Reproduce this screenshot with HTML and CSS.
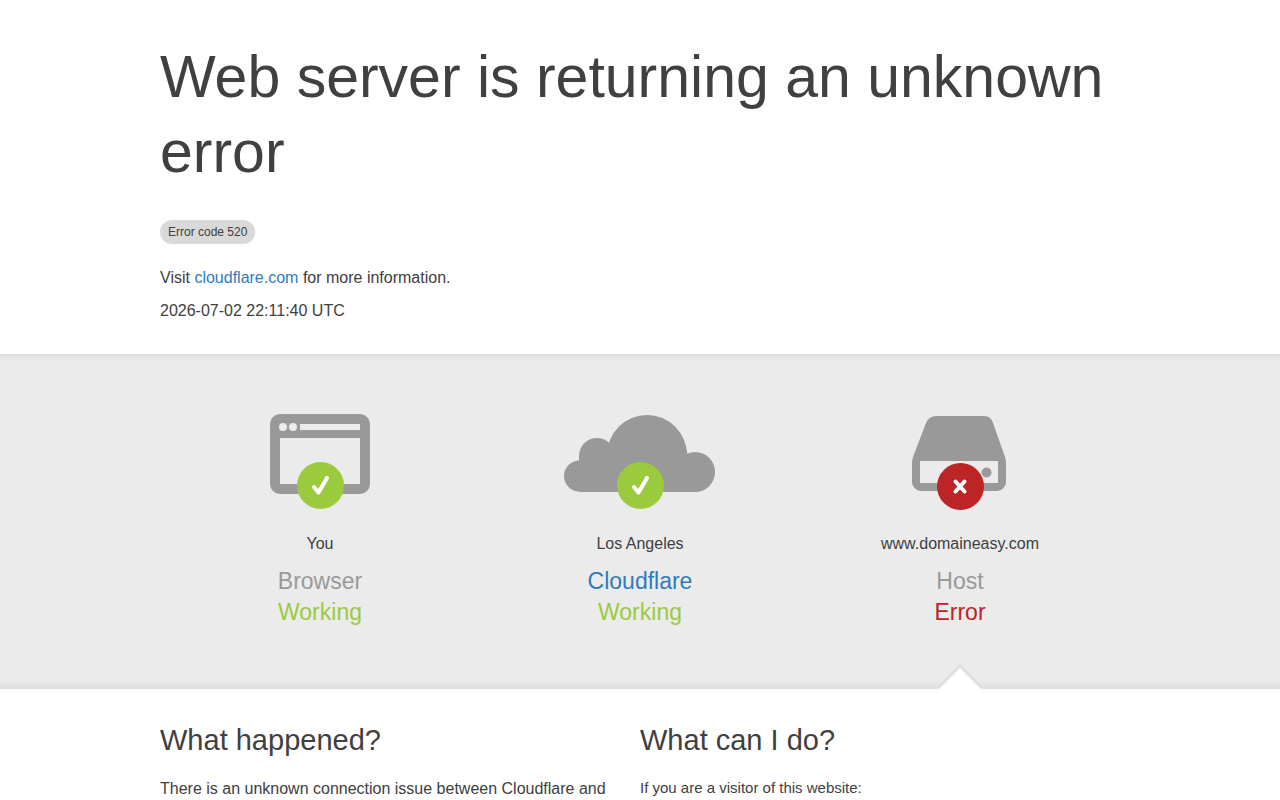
FILE: index.html
```html
<!DOCTYPE html>
<html lang="en">
  <head>
    <meta charset="utf-8">
    <title>domaineasy.com | 520: Web server is returning an unknown error</title>
    <meta name="viewport" content="width=device-width, initial-scale=1">
    <link rel="stylesheet" href="styles.css">
  </head>
  <body>
    <header class="wrapper header">
      <h1>Web server is returning an unknown error</h1>
      <span class="code-label">Error code 520</span>
      <p>Visit <a href="https://www.cloudflare.com/">cloudflare.com</a> for more information.</p>
      <p>2026-07-02 22:11:40 UTC</p>
    </header>

    <section class="status">
      <div class="wrapper status-row">
        <div class="status-item">
          <svg class="icon" viewBox="0 0 160 100" aria-hidden="true">
            <path fill="#999" fill-rule="evenodd" d="M40 4h80a10 10 0 0 1 10 10v60a10 10 0 0 1-10 10H40a10 10 0 0 1-10-10V14A10 10 0 0 1 40 4zM40 28v46h80V28zM60 14v6h60v-6z"/>
            <circle cx="43" cy="17" r="4" fill="#ebebeb"/>
            <circle cx="53" cy="17" r="4" fill="#ebebeb"/>
            <circle cx="80.500" cy="75.500" r="23.500" fill="#9bca3e"/>
            <path fill="none" stroke="#fff" stroke-width="4" stroke-linecap="round" stroke-linejoin="round" d="M74 77l4.500 5.500L87 68"/>
          </svg>
          <span class="place">You</span>
          <h3 class="name">Browser</h3>
          <span class="result ok">Working</span>
        </div>
        <div class="status-item">
          <svg class="icon" viewBox="0 0 160 100" aria-hidden="true">
            <g fill="#999">
              <circle cx="19.500" cy="66" r="15.500"/>
              <circle cx="37" cy="46" r="18"/>
              <circle cx="87" cy="45" r="40"/>
              <circle cx="135" cy="62" r="20"/>
              <path d="M19 46h20V40h88v22h8v20H19z"/>
            </g>
            <circle cx="80.500" cy="75.500" r="23.500" fill="#9bca3e"/>
            <path fill="none" stroke="#fff" stroke-width="4" stroke-linecap="round" stroke-linejoin="round" d="M74 77l4.500 5.500L87 68"/>
          </svg>
          <span class="place">Los Angeles</span>
          <h3 class="name"><a href="https://www.cloudflare.com/">Cloudflare</a></h3>
          <span class="result ok">Working</span>
        </div>
        <div class="status-item current">
          <svg class="icon" viewBox="0 0 160 100" aria-hidden="true">
            <path fill="#999" fill-rule="evenodd" d="M56 6h48q7 0 9 7l12 34q1 3 1 6v19a9 9 0 0 1-9 9H41a9 9 0 0 1-9-9V53q0-3 1-6L46 13q3-7 10-7zM41 51q-1 0-1 1v20q0 1 1 1h76q1 0 1-1V52q0-1-1-1z"/>
            <circle cx="106.500" cy="62.500" r="5" fill="#999"/>
            <circle cx="80.500" cy="76.500" r="23.500" fill="#bd2426"/>
            <path fill="none" stroke="#fff" stroke-width="4" stroke-linecap="round" d="M75.500 71.500l9 10M84.500 71.500l-9 10"/>
          </svg>
          <span class="place">www.domaineasy.com</span>
          <h3 class="name">Host</h3>
          <span class="result error">Error</span>
        </div>
      </div>
    </section>

    <main class="wrapper details">
      <div>
        <h2>What happened?</h2>
        <p>There is an unknown connection issue between Cloudflare and</p>
      </div>
      <div>
        <h2>What can I do?</h2>
        <h4>If you are a visitor of this website:</h4>
      </div>
    </main>
  </body>
</html>
```
FILE: styles.css
```css
* {
  box-sizing: border-box;
}

body {
  margin: 0;
  background: #fff;
  color: #404040;
  font-family: "Liberation Sans", Arial, sans-serif;
  font-size: 16px;
  line-height: 24px;
}

h1, h2, h3, h4, p {
  margin: 0;
  font-weight: 400;
}

a {
  color: #2f7bbf;
  text-decoration: none;
}

.wrapper {
  width: 75%;
  margin: 0 auto;
}

.header {
  padding: 40px 0 31px;
}

.header h1 {
  margin-bottom: 30px;
  font-size: 59px;
  line-height: 75px;
}

.code-label {
  display: block;
  width: max-content;
  margin-bottom: 22px;
  padding: 0 8px;
  border-radius: 12px;
  background: #d9d9d9;
  font-size: 12px;
}

.header p + p {
  margin-top: 9px;
}

.status {
  padding: 56px 0 61px;
  background: linear-gradient(to bottom, #dcdcdc, #e6e6e6 4px, #ebebeb 8px, #ebebeb calc(100% - 8px), #dedede);
}

.status-row {
  display: flex;
}

.status-item {
  position: relative;
  flex: 1;
  display: flex;
  flex-direction: column;
  align-items: center;
}

.icon {
  width: 160px;
  height: 100px;
  margin-bottom: 22px;
}

.place {
  margin-bottom: 10px;
}

.name,
.result {
  font-size: 23px;
  line-height: 31px;
}

.name {
  color: #999;
}

.ok {
  color: #9bca3e;
}

.error {
  color: #bd2426;
}

/* notch pointing at the failing step */
.current::before,
.current::after {
  content: "";
  position: absolute;
  bottom: -61px;
  left: 50%;
  transform: translateX(-50%);
  border: 25px solid transparent;
  border-top: 0;
  border-bottom-color: #e0e0e0;
}

.current::after {
  border-width: 0 21px 21px;
  border-bottom-color: #fff;
}

.details {
  display: grid;
  grid-template-columns: 1fr 1fr;
  padding: 32px 0 40px;
}

.details h2 {
  margin-bottom: 18px;
  font-size: 29px;
  line-height: 38px;
}

.details h4 {
  font-size: 15px;
  line-height: 22px;
}
```
